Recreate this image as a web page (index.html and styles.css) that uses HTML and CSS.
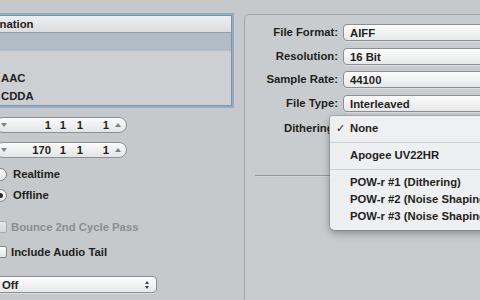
FILE: index.html
```html
<!DOCTYPE html>
<html>
<head>
<meta charset="utf-8">
<link rel="stylesheet" href="styles.css">
</head>
<body>
<div class="page">
  <div class="left">
    <div class="list">
      <div class="list-head">Destination</div>
      <div class="row sel"></div>
      <div class="row"></div>
      <div class="row">AAC</div>
      <div class="row">CDDA</div>
    </div>

    <div class="stepper first">
      <span class="arr"><span class="tri-down"></span></span>
      <span class="f f1">1</span><span class="f f2">1</span><span class="f f3">1</span><span class="f f4">1</span>
      <span class="arr up"><span class="tri-up"></span></span>
    </div>
    <div class="stepper">
      <span class="arr"><span class="tri-down"></span></span>
      <span class="f f1">170</span><span class="f f2">1</span><span class="f f3">1</span><span class="f f4">1</span>
      <span class="arr up"><span class="tri-up"></span></span>
    </div>

    <div class="opt first-radio"><span class="radio"></span>Realtime</div>
    <div class="opt second-radio"><span class="radio on"></span>Offline</div>

    <div class="opt check disabled"><span class="box"></span>Bounce 2nd Cycle Pass</div>
    <div class="opt check second-check"><span class="box"></span>Include Audio Tail</div>

    <div class="popup off">Off<span class="dbl"><span class="tri-up sm"></span><span class="tri-down sm"></span></span></div>
  </div>

  <div class="right">
    <div class="group">
      <div class="form">
        <div class="lbl">File Format:</div><div class="popup">AIFF</div>
        <div class="lbl">Resolution:</div><div class="popup">16 Bit</div>
        <div class="lbl">Sample Rate:</div><div class="popup">44100</div>
        <div class="lbl">File Type:</div><div class="popup">Interleaved</div>
        <div class="lbl dith"><span class="dith-text">Dithering:</span></div><div class="popup dith"></div>
      </div>
      <div class="sep"></div>
    </div>
  </div>

  <div class="menu">
    <div class="item"><span class="check">✓</span>None</div>
    <div class="msep"></div>
    <div class="item">Apogee UV22HR</div>
    <div class="msep"></div>
    <div class="item">POW-r #1 (Dithering)</div>
    <div class="item">POW-r #2 (Noise Shaping)</div>
    <div class="item">POW-r #3 (Noise Shaping)</div>
  </div>
</div>
</body>
</html>
```

FILE: styles.css
```css
html, body {
  margin: 0;
  padding: 0;
}
body {
  width: 480px;
  height: 300px;
  overflow: hidden;
  background: #c6c9cb;
  font-family: "Liberation Sans", Arial, sans-serif;
  font-weight: bold;
  font-size: 11.3px;
  color: #1e1f20;
}
.page {
  position: relative;
  display: flex;
  width: 480px;
  height: 300px;
  overflow: hidden;
}
.left {
  flex-shrink: 0;
  width: 276px;
  margin-left: -40px;
  padding-top: 15px;
  display: flex;
  flex-direction: column;
  align-items: flex-start;
}
.list {
  width: 270px;
  border: 1px solid #7d93a8;
  box-shadow: 0 0 0 2px #93adc6;
  background: #ccd0d3;
}
.list-head {
  height: 16px;
  line-height: 17px;
  padding-left: 11px;
  background: linear-gradient(#eeeeee, #dcdddd);
  border-bottom: 1px solid #9a9c9f;
}
.row {
  height: 18px;
  line-height: 19px;
  padding-left: 40px;
}
.row.sel {
  background: #b2bcc5;
}
.stepper {
  margin-top: 9px;
  margin-left: 35px;
  width: 130px;
  height: 14px;
  border: 1px solid #8e9093;
  border-radius: 8px;
  background: linear-gradient(#fbfbfb, #e3e4e5);
  display: flex;
  align-items: center;
  line-height: 14px;
}
.stepper.first {
  margin-top: 11px;
}
.arr {
  width: 16px;
  display: flex;
  justify-content: center;
}
.arr.up {
  width: 17px;
  justify-content: center;
}
.f {
  text-align: right;
}
.f1 { width: 39px; }
.f2 { width: 15px; }
.f3 { width: 17px; }
.f4 { width: 26px; }
.tri-down {
  width: 0;
  height: 0;
  border-left: 3px solid transparent;
  border-right: 3px solid transparent;
  border-top: 4px solid #808285;
}
.tri-up {
  width: 0;
  height: 0;
  border-left: 3px solid transparent;
  border-right: 3px solid transparent;
  border-bottom: 4px solid #808285;
}
.opt {
  height: 18px;
  display: flex;
  align-items: center;
  margin-left: 34px;
}
.first-radio { margin-top: 7px; }
.second-radio { margin-top: 3px; }
.radio {
  width: 13px;
  height: 13px;
  border: 1px solid #808286;
  border-radius: 50%;
  background: linear-gradient(#ffffff, #e2e3e4);
  margin-right: 6px;
  display: flex;
  align-items: center;
  justify-content: center;
  box-sizing: border-box;
  flex-shrink: 0;
}
.radio.on::after {
  content: "";
  width: 5px;
  height: 5px;
  border-radius: 50%;
  background: #2a2b2d;
}
.check {
  margin-left: 35px;
  margin-top: 14px;
}
.check.second-check {
  margin-top: 7px;
}
.box {
  width: 12px;
  height: 12px;
  box-sizing: border-box;
  border: 1px solid #828488;
  border-radius: 2px;
  background: linear-gradient(#ffffff, #e3e4e5);
  margin-right: 4px;
}
.disabled {
  color: #8a8d90;
}
.disabled .box {
  border-color: #a9abae;
  background: linear-gradient(#e4e5e6, #d6d7d8);
}
.popup {
  height: 15px;
  line-height: 16px;
  border: 1px solid #8c8e91;
  border-radius: 4px;
  background: linear-gradient(#fdfdfd, #e6e7e8);
  padding-left: 6px;
  box-shadow: 0 1px 0 rgba(255,255,255,0.35);
}
.popup.off {
  margin-top: 15px;
  margin-left: 35px;
  width: 154px;
  display: flex;
  justify-content: space-between;
  align-items: center;
  padding-right: 0;
}
.dbl {
  width: 18px;
  display: flex;
  flex-direction: column;
  align-items: center;
  gap: 2px;
}
.tri-up.sm, .tri-down.sm {
  border-left-width: 2px;
  border-right-width: 2px;
  border-top-width: 3px;
  border-bottom-width: 3px;
}
.tri-down.sm { border-top-color: #3c3d3f; }
.tri-up.sm { border-bottom-color: #3c3d3f; }
.right {
  flex-shrink: 0;
  width: 260px;
  padding-left: 8px;
  padding-top: 14px;
}
.group {
  height: 300px;
  border-top: 1px solid #a2a5a8;
  border-left: 1px solid #a2a5a8;
  border-radius: 5px 0 0 0;
  background: #c9ccce;
  padding-top: 9px;
}
.form {
  display: grid;
  grid-template-columns: 93px 160px;
  column-gap: 5px;
  row-gap: 6.67px;
  align-items: center;
}
.lbl {
  text-align: right;
  line-height: 17px;
  white-space: nowrap;
}
.lbl.dith {
  display: flex;
  justify-content: flex-start;
  padding-left: 39px;
}
.dith-text {
  display: block;
  width: 45px;
  overflow: hidden;
  white-space: nowrap;
}
.lbl.dith, .popup.dith {
  margin-top: 1.5px;
}
.sep {
  margin-top: 38px;
  margin-left: 10px;
  height: 0;
  border-top: 1px solid #94979a;
  border-bottom: 1px solid #d3d6d8;
}
.menu {
  position: absolute;
  left: 330px;
  top: 116px;
  width: 170px;
  padding: 4px 0 5px 0;
  background: rgba(239, 240, 241, 0.98);
  border-radius: 3px 0 0 5px;
  box-shadow: 0 3px 9px rgba(0,0,0,0.35), 0 0 0 1px rgba(0,0,0,0.12);
}
.item {
  position: relative;
  height: 17px;
  line-height: 17px;
  padding-left: 20px;
  white-space: nowrap;
}
.item .check {
  position: absolute;
  left: 6px;
  top: 0;
  margin: 0;
  font-family: "DejaVu Sans", sans-serif;
  font-size: 11px;
}
.msep {
  height: 10px;
  display: flex;
  align-items: center;
}
.msep::after {
  content: "";
  display: block;
  width: 100%;
  height: 1px;
  background: #cfd1d3;
}
```
